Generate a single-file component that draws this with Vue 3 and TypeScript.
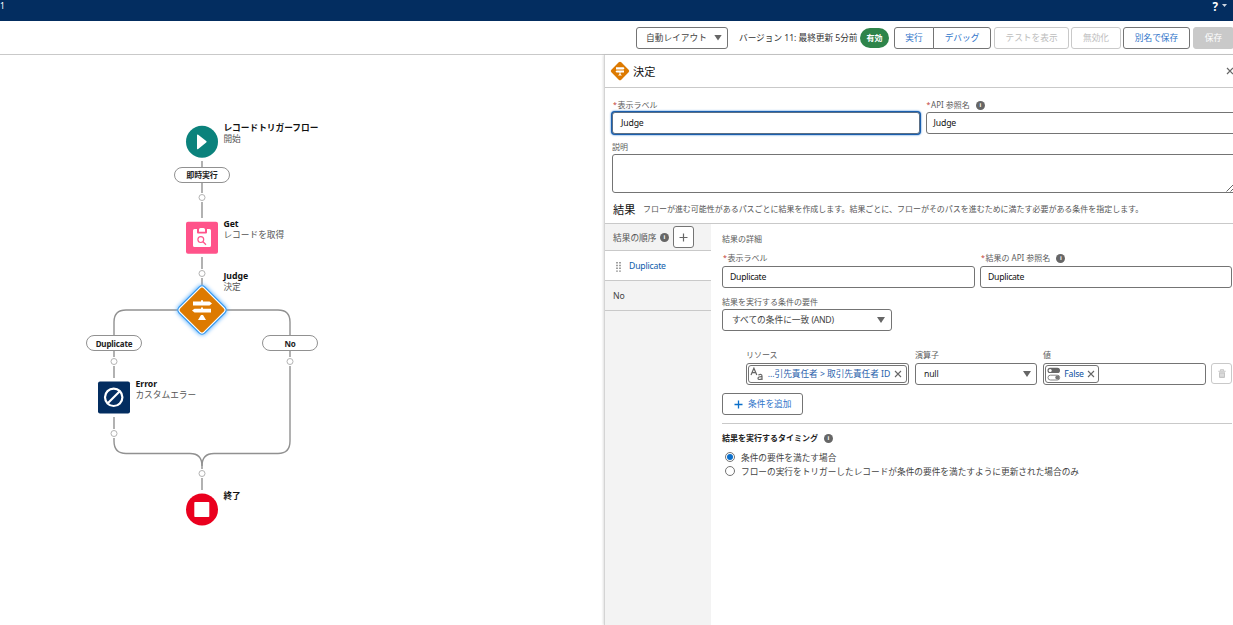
<script setup lang="ts">
import { ref } from 'vue'

interface FlowLabel {
  title: string
  sub: string
  place: string
}

const labels: FlowLabel[] = [
  { title: 'レコードトリガーフロー', sub: '開始', place: 'at-start' },
  { title: 'Get', sub: 'レコードを取得', place: 'at-get' },
  { title: 'Judge', sub: '決定', place: 'at-judge' },
  { title: 'Error', sub: 'カスタムエラー', place: 'at-error' },
  { title: '終了', sub: '', place: 'at-end' },
]

const connectors: string[] = [
  'M202 161V167', 'M202 183V193', 'M202 202V218', 'M202 257V269', 'M202 278V285',
  'M178 310H126Q114 310 114 322V335', 'M226 310H278Q290 310 290 322V335',
  'M114 351V357', 'M290 351V357', 'M114 366V378', 'M114 417V429',
  'M114 438V441Q114 453.5 126 453.5H190Q202 453.5 202 466V469',
  'M290 366V441Q290 453.5 278 453.5H214Q202 453.5 202 466', 'M202 478V490',
]

const joints: [number, number][] = [
  [202, 197.5], [202, 273.5], [114, 361.5], [290, 361.5], [114, 433.5], [202, 473.5],
]

const timings: string[] = [
  '条件の要件を満たす場合',
  'フローの実行をトリガーしたレコードが条件の要件を満たすように更新された場合のみ',
]
const timing = ref(0)
</script>

<template>
  <div class="app">
    <header class="nav">
      <span class="tab">1</span>
      <span class="help">?<i class="caret"></i></span>
    </header>

    <div class="toolbar">
      <div class="select layout"><span>自動レイアウト</span><i class="arrow"></i></div>
      <span class="version">バージョン 11: 最終更新 5分前</span>
      <span class="badge">有効</span>
      <div class="group">
        <button class="btn run">実行</button><button class="btn debug">デバッグ</button>
      </div>
      <button class="btn off tests">テストを表示</button>
      <button class="btn off disable">無効化</button>
      <button class="btn saveas">別名で保存</button>
      <button class="btn save">保存</button>
    </div>

    <main class="body">
      <section class="canvas">
        <svg class="graph" viewBox="0 55 604 570" width="604" height="570">
          <defs>
            <filter id="glow" x="-40%" y="-40%" width="180%" height="180%"><feGaussianBlur stdDeviation="2" /></filter>
          </defs>
          <path v-for="d in connectors" :key="d" :d="d" fill="none" stroke="#919191" stroke-width="1.4" />
          <circle v-for="j in joints" :key="j.join()" :cx="j[0]" :cy="j[1]" r="3" fill="#fff" stroke="#aaa" stroke-width=".9" />
          <circle cx="202" cy="141.700" r="16" fill="#0b827c" />
          <path d="M197 135.200Q197 134 198.200 134.800L206.200 140.900Q207.200 141.700 206.200 142.500L198.200 149Q197 149.800 197 148.600Z" fill="#fff" />
          <rect x="186" y="221.700" width="32" height="32" rx="2" fill="#ff538a" />
          <path d="M194.500 229H197V232.500Q197 233.500 198 233.500H206Q207 233.500 207 232.500V229H209.500Q211 229 211 230.500V245.500Q211 247 209.500 247H194.500Q193 247 193 245.500V230.500Q193 229 194.500 229ZM199 231.700V229.500Q199 228 200.500 228H203.500Q205 228 205 229.500V231.700Z" fill="#fff" />
          <circle cx="200.800" cy="239.600" r="2.900" fill="none" stroke="#ff538a" stroke-width="1.200" />
          <path d="M203 241.800L206 244.800" stroke="#ff538a" stroke-width="1.300" />
          <rect x="183" y="291" width="38" height="38" rx="5" transform="rotate(45 202 310)" fill="#4aa8ff" filter="url(#glow)" />
          <rect x="183.800" y="291.800" width="36.400" height="36.400" rx="4" transform="rotate(45 202 310)" fill="#fff" stroke="#3296ed" stroke-width="1.200" />
          <rect x="185.500" y="293.500" width="33" height="33" rx="2.200" transform="rotate(45 202 310)" fill="#dd7a01" />
          <path d="M193 301.500H201V300.200H203V301.500H209.500L212 303.500L209.500 305.500H193ZM211 308.800H203V307.500H201V308.800H194.500L192 310.600L194.500 312.500H211ZM201 315H203L206 320H198Z" fill="#fff" />
          <rect x="98" y="381.500" width="32" height="32" rx="2" fill="#032d60" />
          <circle cx="113.700" cy="397.300" r="8.700" fill="none" stroke="#fff" stroke-width="2.200" />
          <path d="M108 403L119.500 391.500" stroke="#fff" stroke-width="2.200" />
          <circle cx="202" cy="509.500" r="16" fill="#ea001e" />
          <rect x="194.300" y="502" width="15" height="15" rx=".8" fill="#fff" />
        </svg>
        <span class="pill p-now">即時実行</span>
        <span class="pill p-dup">Duplicate</span>
        <span class="pill p-no">No</span>
        <div v-for="l in labels" :key="l.title" class="flabel" :class="l.place">
          <b>{{ l.title }}</b><span>{{ l.sub }}</span>
        </div>
      </section>

      <aside class="panel">
        <div class="phead">
          <svg width="20" height="20" viewBox="0 0 20 20">
            <rect x="3" y="3" width="14" height="14" rx="1.800" transform="rotate(45 10 10)" fill="#dd7a01" />
            <path d="M6 6.200H13.500L14.500 7.200L13.500 8.400H6ZM14 9.400H6.500L5.500 10.500L6.500 11.600H14ZM9.500 11.600H10.500V13L12 14.500H8L9.500 13Z" fill="#fff" />
          </svg>
          <h1>決定</h1>
          <svg class="close" width="8" height="8" viewBox="0 0 8 8"><path d="M1 1L7 7M7 1L1 7" stroke="#666" stroke-width="1.200" /></svg>
        </div>

        <div class="form">
          <div class="two">
            <div class="wide">
              <label class="lab"><em>*</em>表示ラベル</label>
              <div class="input focus">Judge</div>
            </div>
            <div class="api">
              <label class="lab"><em>*</em>API 参照名<i class="info">i</i></label>
              <div class="input">Judge</div>
            </div>
          </div>
          <label class="lab desc">説明</label>
          <div class="area">
            <svg width="8" height="8" viewBox="0 0 8 8"><path d="M.5 7.500L7.500.5M4.500 7.500L7.500 4.500" stroke="#555" stroke-width=".9" /></svg>
          </div>
          <div class="result">
            <h2>結果</h2>
            <p>フローが進む可能性があるパスごとに結果を作成します。結果ごとに、フローがそのパスを進むために満たす必要がある条件を指定します。</p>
          </div>
        </div>

        <div class="split">
          <div class="side">
            <div class="order">
              <span>結果の順序</span><i class="info">i</i>
              <button class="add"><svg width="9" height="9" viewBox="0 0 9 9"><path d="M4.500.5V8.500M.5 4.500H8.500" stroke="#666" stroke-width="1.200" /></svg></button>
            </div>
            <div class="item active">
              <svg width="5" height="10" viewBox="0 0 5 10"><path d="M1 0V10M4 0V10" stroke="#777" stroke-width="1.400" stroke-dasharray="1.400 1.400" /></svg>
              <span>Duplicate</span>
            </div>
            <div class="item">No</div>
          </div>

          <div class="detail">
            <div class="lab">結果の詳細</div>
            <div class="pair">
              <div>
                <label class="lab"><em>*</em>表示ラベル</label>
                <div class="input">Duplicate</div>
              </div>
              <div>
                <label class="lab"><em>*</em>結果の API 参照名<i class="info">i</i></label>
                <div class="input">Duplicate</div>
              </div>
            </div>
            <label class="lab req">結果を実行する条件の要件</label>
            <div class="select cond"><span>すべての条件に一致 <u>(AND)</u></span><i class="arrow"></i></div>

            <div class="crit">
              <div class="c1">
                <label class="lab">リソース</label>
                <div class="input holder">
                  <span class="chip">
                    <svg width="14" height="14" viewBox="0 0 14 14"><path d="M1 8L3.900 1.200L6.800 8M2.100 5.700H5.700" fill="none" stroke="#666" stroke-width="1.200" /><path d="M8.300 8Q12 6.500 12 9.200V13M12 9.700Q8 9.500 8 11.300Q8.300 13.500 12 11.700" fill="none" stroke="#666" stroke-width="1.200" /></svg>
                    <span class="res">...引先責任者 &gt; 取引先責任者 ID</span>
                    <svg width="8" height="8" viewBox="0 0 8 8"><path d="M1 1L7 7M7 1L1 7" stroke="#666" stroke-width="1.100" /></svg>
                  </span>
                </div>
              </div>
              <div class="c2">
                <label class="lab">演算子</label>
                <div class="select op"><span>null</span><i class="arrow"></i></div>
              </div>
              <div class="c3">
                <label class="lab">値</label>
                <div class="input holder">
                  <span class="chip val">
                    <svg width="14" height="14" viewBox="0 0 14 14"><rect x=".5" y=".8" width="12.500" height="5.200" rx="2.600" fill="#666" /><circle cx="3.200" cy="3.400" r="1.500" fill="#fff" /><rect x="1" y="8.200" width="11.700" height="4.800" rx="2.400" fill="#fff" stroke="#777" stroke-width=".9" /><circle cx="10.300" cy="10.600" r="2" fill="#777" /></svg>
                    <span>False</span>
                    <svg width="8" height="8" viewBox="0 0 8 8"><path d="M1 1L7 7M7 1L1 7" stroke="#666" stroke-width="1.100" /></svg>
                  </span>
                </div>
              </div>
              <button class="trash">
                <svg width="8" height="9" viewBox="0 0 8 9"><path d="M.3 2.300H7.700M2.700 2V.7H5.300V2" fill="none" stroke="#c4c4c4" stroke-width="1.100" /><path d="M1 3.300H7V8Q7 9 6 9H2Q1 9 1 8Z" fill="#c4c4c4" /><path d="M3 4.500V7.700M5 4.500V7.700" stroke="#fff" stroke-width=".8" /></svg>
              </button>
            </div>

            <button class="addcond">
              <svg width="9" height="9" viewBox="0 0 9 9"><path d="M4.500.5V8.500M.5 4.500H8.500" stroke="#0b6fca" stroke-width="1.300" /></svg>
              <span>条件を追加</span>
            </button>
            <div class="rule"></div>
            <div class="lab when">結果を実行するタイミング<i class="info">i</i></div>
            <div v-for="(t, i) in timings" :key="t" class="radio" @click="timing = i">
              <i class="dot" :class="{ on: timing === i }"></i><span>{{ t }}</span>
            </div>
          </div>
        </div>
      </aside>
    </main>
  </div>
</template>

<style>
body { overflow: hidden; background: #fff; }
</style>

<style scoped>
* { box-sizing: border-box; }
.app {
  width: 1233px; height: 625px; overflow: hidden; display: flex; flex-direction: column;
  font-family: "Noto Sans", "Noto Sans CJK JP", sans-serif; font-size: 8.7px; color: #333; background: #fff;
  white-space: nowrap;
}
button { font: inherit; padding: 0; margin: 0; background: #fff; border: 1px solid #747474; border-radius: 3px; }
i, em { font-style: normal; }
u { text-decoration: none; }

.nav { height: 21px; flex: none; background: #032d60; color: #fff; display: flex; justify-content: space-between; }
.tab { font-size: 8.5px; line-height: 12px; }
.help { display: flex; gap: 4px; padding: 0 6px 0 0; font-size: 11.5px; font-weight: 700; line-height: 13px; }
.caret { width: 5px; height: 3px; margin-top: 4px; background: #cdd5df; clip-path: polygon(0 0, 100% 0, 50% 100%); }

.toolbar { height: 34px; flex: none; border-bottom: 1px solid #c9c9c9; display: flex; align-items: center; padding-left: 636px; }
.select { height: 22px; border: 1px solid #747474; border-radius: 3px; display: flex; align-items: center; justify-content: space-between; background: #fff; color: #444; }
.arrow { width: 8px; height: 6px; background: #666; clip-path: polygon(0 0, 100% 0, 50% 100%); }
.layout { width: 92px; padding: 0 5px 0 9px; flex: none; }
.version { width: 119px; margin-left: 11px; flex: none; letter-spacing: -.05px; }
.badge { width: 29px; height: 20px; margin-left: 2px; border-radius: 10px; background: #2e844a; color: #fff; font-weight: 700; font-size: 8px; text-align: center; line-height: 19px; flex: none; }
.group { display: flex; margin: 0 3px 0 5px; flex: none; }
.btn { height: 22px; color: #2f74c9; flex: none; }
.run { width: 40px; border-radius: 3px 0 0 3px; }
.debug { width: 58px; margin-left: -1px; border-radius: 0 3px 3px 0; }
.off { color: #bdbdbd; border-color: #c9c9c9; }
.tests { width: 75px; }
.disable { width: 50px; margin-left: 2px; }
.saveas { width: 67px; margin-left: 2px; }
.save { width: 41px; margin-left: 3px; background: #c9c9c9; border-color: #c9c9c9; color: #fff; }

.body { flex: 1; display: flex; min-height: 0; }
.canvas { width: 604px; flex: none; position: relative; }
.graph { display: block; }
.pill { position: absolute; width: 56px; height: 16px; border: 1px solid #919191; border-radius: 8px; background: #fff; text-align: center; font-size: 8px; font-weight: 700; line-height: 15px; color: #222; letter-spacing: -.15px; }
.p-now { left: 174px; top: 112px; line-height: 14px; }
.p-dup { left: 86px; top: 280px; }
.p-no { left: 262px; top: 280px; }
.flabel { position: absolute; display: flex; flex-direction: column; line-height: 11px; color: #555; }
.flabel b { color: #111; font-weight: 700; }
.at-start { left: 223.4px; top: 68px; }
.at-get { left: 223.4px; top: 164px; }
.at-judge { left: 223.4px; top: 216px; }
.at-error { left: 135.4px; top: 324px; }
.at-end { left: 223.4px; top: 436px; }

.panel { width: 640px; flex: none; background: #fff; border-left: 1px solid #d4d4d4; box-shadow: -1px 0 2px rgba(0, 0, 0, .12); }
.phead { height: 33px; border-bottom: 1px solid #c9c9c9; display: flex; align-items: center; padding-left: 5px; }
.phead h1 { margin: 0 0 0 3px; font-size: 11.2px; font-weight: 400; color: #111; width: 593px; }
.close { flex: none; }
.form { height: 135px; padding: 12px 0 0 7px; }
.two { display: flex; gap: 6px; }
.wide { width: 309px; }
.api { width: 320px; }
.lab { display: flex; align-items: center; height: 10px; line-height: 10px; font-size: 8px; color: #5c5c5c; }
.lab em { color: #c23934; width: 3px; margin: 0 1.5px 0 1px; font-size: 7px; }
.info { width: 9px; height: 9px; border-radius: 50%; background: #666; color: #fff; font-size: 6px; font-weight: 700; line-height: 9px; text-align: center; flex: none; }
.lab .info { margin-left: 6px; }
.input { height: 22px; margin-top: 2px; border: 1px solid #747474; border-radius: 3px; padding-left: 7px; line-height: 20px; color: #111; background: #fff; letter-spacing: -.28px; }
.two .input { letter-spacing: -.15px; }
.two .focus { padding-left: 8px; }
.focus { border-color: #5b6f85; box-shadow: 0 0 0 1px #1b5fae, 0 0 2px 1px #1b73cf; }
.desc { margin-top: 8px; }
.area { height: 39px; width: 623px; margin-top: 2px; border: 1px solid #747474; border-radius: 3px 0 0 3px; display: flex; justify-content: flex-end; align-items: flex-end; }
.result { display: flex; align-items: center; height: 29px; padding-top: 2px; }
.result h2 { margin: 0 0 0 1px; font-size: 11.2px; font-weight: 400; color: #111; width: 30px; }
.result p { margin: 0; font-size: 8px; color: #555; letter-spacing: -.03px; }

.split { display: flex; height: 402px; border-top: 1px solid #c9c9c9; }
.side { width: 106px; flex: none; background: #f3f3f3; }
.order { height: 27px; display: flex; align-items: center; border-bottom: 1px solid #c9c9c9; padding-left: 8px; color: #555; }
.order span { width: 47px; }
.add { width: 21px; height: 22px; margin-left: 4px; display: grid; place-items: center; }
.item { height: 30px; border-bottom: 1px solid #c9c9c9; padding-left: 8px; display: flex; align-items: center; color: #444; letter-spacing: -.2px; }
.active { background: #fff; padding-left: 11px; color: #0b5cab; }
.active span { margin: 1px 0 0 8px; }
.active svg { margin-top: 2px; }

.detail { flex: 1; padding: 10px 0 0 11px; }
.pair { display: grid; grid-template-columns: 253px 252px; gap: 5px; margin-top: 9px; }
.pair .input { margin-top: 3px; }
.req { margin-top: 9px; }
.cond { width: 170px; padding: 0 6px 0 9px; margin-top: 2px; }
.cond span { margin-top: -1px; }
.cond u { letter-spacing: -.3px; }
.crit { display: flex; margin: 19px 0 0 24px; }
.crit .input, .crit .select { margin-top: 3px; }
.c1 { width: 163px; margin-right: 6px; }
.c2 { width: 122px; margin-right: 6px; }
.c3 { width: 163px; }
.op { padding: 0 5px 0 8px; color: #222; letter-spacing: -.2px; }
.holder { padding: 1px; }
.chip { height: 18px; border: 1px solid #747474; border-radius: 3px; display: flex; align-items: center; justify-content: space-between; padding: 0 4px 0 1px; color: #0b4fa0; line-height: 16px; }
.res { letter-spacing: -.06px; color: #2a62ac; }
.val { width: 54px; padding-right: 3px; }
.trash { width: 21px; height: 21px; margin: 13px 0 0 5px; border-color: #c9c9c9; display: grid; place-items: center; }
.addcond { width: 81px; height: 22px; margin-top: 8px; display: flex; align-items: center; padding-left: 11px; gap: 5px; color: #2f74c9; }
.addcond span { margin-top: -1px; }
.rule { height: 1px; width: 510px; background: #c9c9c9; margin: 8px 0 9px; }
.when { font-weight: 700; color: #222; margin-bottom: 7px; }
.radio { height: 14px; display: flex; align-items: center; padding-left: 3px; gap: 6px; color: #444; letter-spacing: -.02px; }
.dot { width: 10px; height: 10px; border: 1px solid #747474; border-radius: 50%; display: grid; place-items: center; }
.dot.on::after { content: ""; width: 6px; height: 6px; border-radius: 50%; background: #0b6fca; }
</style>
